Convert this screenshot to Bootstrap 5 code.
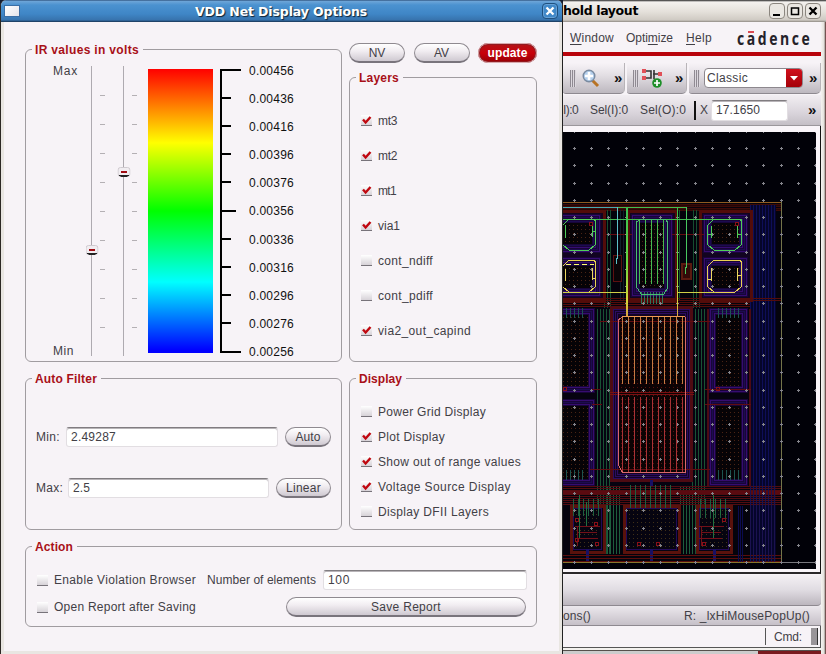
<!DOCTYPE html>
<html lang="en">
<head>
<meta charset="utf-8">
<title>VDD Net Display Options</title>
<link href="https://cdn.jsdelivr.net/npm/bootstrap@5.3.0/dist/css/bootstrap.min.css" rel="stylesheet">
<style>
body{width:826px;height:654px;overflow:hidden;background:#141c30;font:12px/14px "Liberation Sans",Arial,sans-serif;color:#424046}
svg{display:block;flex:none}
.dialog{width:563px;height:654px;flex:none;border-left:1px solid #2c2824;border-right:1px solid #222;border-radius:6px 6px 0 0;background:#e9e6e2;overflow:hidden}
.titlebar{height:22px;flex:none;font:bold 12.5px/22px "DejaVu Sans",sans-serif;white-space:nowrap}
.dlg-title{background:linear-gradient(#1c3c66 0,#6fa6d8 1px,#4b92d0 5px,#3f86c6 14px,#3773ad 20px,#173352 22px);color:#fff;text-shadow:1px 1px 1px #123}
.dlg-title b{padding-top:1px}
.dlg-icon{width:14px;height:10px;background:linear-gradient(135deg,#fff,#e3e3ea);box-shadow:0 0 0 1px #3a6ea5}
.dlg-name{padding-left:176px}
.dlg-close{width:16px;height:16px;border:1px solid #20517f;border-radius:4px;background:#4088c8;box-shadow:inset 0 0 0 1px #66a1d6}
.dlg-body{height:629px;margin:0 3px;padding:21px 21px 0;background:#f7f3f7;display:grid;grid-template-columns:317px 188px;column-gap:7px;grid-template-rows:319px 168px 97px;align-items:end;align-content:start}
.group{border:1px solid #a09ca0;border-radius:6px;margin:0;min-width:0}
.group-title{width:max-content;margin:-7px 0 0 6px;padding:0 4px 0 3px;background:#f7f3f7;color:#a81018;font-size:12px;font-weight:bold;line-height:14px;height:14px;white-space:nowrap}
.g-ir{height:313px}.g-layers{height:285px}.g-filter,.g-display{height:152px}.g-action{height:81px;grid-column:span 2}
.ir-row{padding:7px 0 0 27px}
.ends{width:33px;height:294px}
.bar-spectrum{width:65px;height:284px;margin:5px 0 0 9px;background:linear-gradient(#f00,#ff0 26%,#0f0 50%,#0ff 75%,#00f 99%)}
.scale-svg{margin-left:7px}
.scale-nums{height:295px;color:#111}
.pill{border:1px solid #8f8a90;border-bottom:2px solid #79747c;border-radius:10px;height:20px;padding:0;background:linear-gradient(#fff,#f2eef2 40%,#cfc9d1);color:#424046;font-size:12px;line-height:16px}
.pill-red{background:linear-gradient(#b51217,#c8000a 50%,#9d0006);border:2px solid #931a20;outline:1px solid #d8a8ac;outline-offset:-1px;color:#fff;font-weight:bold;line-height:15px}
.modes{margin-bottom:14px}
.modes .pill{width:56px}.modes .pill-red{width:59px}
.field{height:20px;border:1px solid #e2dee2;border-top:1px solid #807c80;border-radius:3px;background:#fff;padding:0 4px;line-height:18px;color:#424046;box-shadow:inset 0 1px 0 #b8b4b8;white-space:nowrap}
.checks{padding:13px 0 0 11px}
.checks.tall{padding-top:18px}
.check-item{height:25px;gap:6px;white-space:nowrap}
.tall .check-item{height:35px}
.filter-rows{padding:41px 10px 0}
.filter-rows label{height:20px;margin-bottom:31px;white-space:nowrap}
.f-min{width:212px;margin:0 7px 0 6px}.f-max{width:201px;margin:0 7px 0 5px}
.b-auto{width:46px}.b-linear{width:55px}
.act{padding:16px 9px 0 11px;white-space:nowrap}
.act2{padding-top:7px}
.act-check{width:159px;padding-left:6px;flex:none}
.act-num{width:116px;flex:none}
.act-field{width:204px;flex:none}
.act-save{width:240px;margin-left:79px;flex:none}
.w-main{width:263px;height:654px;background:#f7f3f7}
.main-title{background:linear-gradient(#222 0,#f4f2ef 2px,#e4e0da 12px,#cfcac3 20px,#8f8a84 22px);color:#000}
.wbtns{gap:2px;margin-right:5px}
.wbtn{width:16px;height:16px;border:1px solid #8b867f;border-radius:4px;background:#eae7e2}
.main-inner{width:258px;background:#f7f3f7}
.menu{height:30px;padding-top:1px}
.menu u{text-underline-offset:2px}
.m1{width:56px;margin-left:7px}.m2{width:60px}.m3{width:50px}
.stripe{height:4px;background:#b8040c}
.tools{height:39px;padding-top:7px;gap:2px}
.tool{height:31px;border-radius:0 0 5px 3px;background:linear-gradient(#f7f3f7,#e3dfe4 40%,#bdb8bf);border-bottom:1px solid #8e8990;border-right:1px solid #b8b4b8}
.t1{width:62px;padding-left:7px}.t1 svg{margin:0 14px 0 6px}
.t2{width:60px;padding-left:6px}.t2 svg{margin:0 12px 0 2px}
.t3{width:132px;padding-left:5px}.t3 .combo{margin:0 6px 0 4px}
.grip{width:6px;height:17px;background:repeating-linear-gradient(90deg,#8f8a92 0 1px,#dcd8de 1px 2px)}
.more{font:bold 15px/14px "Liberation Sans",sans-serif;color:#111;padding-bottom:1px}
.combo{width:99px;height:20px;border:1px solid #8d888e;border-radius:4px;background:#fff}
.combo-text{padding-left:2px}
.combo-arrow{width:16px;height:18px;background:linear-gradient(#d0101c,#a40008);border-radius:0 3px 3px 0}
.coords{height:31px;background:linear-gradient(#f2eef2,#d9d4db 60%,#c4bfc6);border-bottom:1px solid #9b979c;white-space:nowrap}
.c1{width:27px}.c2{width:50px}.c3{width:54px}
.c4{width:2px;height:19px;background:#111;margin-right:4px}.c5{width:11px}.c6{width:77px;height:21px;margin:0 20px 0 0}
.canvas-frame{height:448px;padding-top:6px;border-right:1px solid #111;border-bottom:2px solid #2a282a;background:#f9f5f9}
.foot1{height:31px;margin-top:1px;border-radius:0 0 4px 0;background:linear-gradient(#f4f0f4,#e0dce2 50%,#bcb6be);border-bottom:1px solid #8e8990}
.foot2{height:20px;background:linear-gradient(#ece8ed,#c6c0c8);border-bottom:1px solid #8e8990;white-space:nowrap}
.foot3{height:22px;border-bottom:1px solid #555;border-right:1px solid #555}
.r-hint{margin-right:11px}
.cmd-line{width:1px;height:17px;background:#555;margin-right:8px}
.cmd-box{width:7px;height:17px;background:#989498;border-right:1px solid #333;margin:0 2px 0 9px}
.desk-edge{height:6px;background:linear-gradient(#f3f1ee 0 2px,#55504c 2px 3px,#0000 3px),linear-gradient(90deg,#ccc 0 195px,#7a1a1e 195px)}
.frame-right{width:5px;background:linear-gradient(90deg,#f6f4f1,#e3e0db 3px,#8f8a84 4px,#5b1a1c 5px)}
</style>
<script src="https://cdn.jsdelivr.net/npm/bootstrap@5.3.0/dist/js/bootstrap.bundle.min.js"></script>
</head>
<body class="d-flex">
<svg width="0" height="0" class="position-absolute"><defs>
<linearGradient id="boxg" x2="0" y2="1"><stop offset="0" stop-color="#fff"/><stop offset="1" stop-color="#d3ced4"/></linearGradient>
<symbol id="off" viewBox="0 0 11 11"><path fill="url(#boxg)" d="M0 0h11v11H0z"/><path d="M0 10.5h11" stroke="#77737a"/></symbol>
<symbol id="on" viewBox="0 0 11 11"><use href="#off"/><path d="M2 4.500L4.600 7.500L9.500 2" fill="none" stroke="#c00810" stroke-width="2.400"/></symbol>
<symbol id="knob" viewBox="0 0 13 11"><rect x=".5" y=".5" width="12" height="9" rx="2.5" fill="#f1edf1" stroke="#cfcacf"/><path d="M1.5 8.5h10M3 9.5h7" stroke="#222"/><path d="M3.5 5h6" stroke="#a00c12" stroke-width="2"/></symbol>
</defs></svg>

<main class="dialog d-flex flex-column">
  <header class="titlebar dlg-title d-flex align-items-center">
    <span class="dlg-icon ms-1"></span>
    <span class="dlg-name flex-grow-1"><b data-w="172">VDD Net Display Options</b></span>
    <span class="dlg-close me-1 d-flex align-items-center justify-content-center"><svg width="10" height="10" viewBox="0 0 10 10"><path d="M1.5 1.5l7 7M8.500 1.500l-7 7" stroke="#fff" stroke-width="2.300"/></svg></span>
  </header>
  <div class="dlg-body">
    <section class="group g-ir">
      <h2 class="group-title"><span data-w="104">IR values in volts</span></h2>
      <div class="ir-row d-flex">
        <div class="ends d-flex flex-column justify-content-between"><span data-w="25">Max</span><span data-w="21">Min</span></div>
        <svg width="53" height="294" viewBox="86 64 53 294">
          <path d="M91.500 66V356M123.500 66V356" stroke="#aeaab0"/>
          <path id="ticks" stroke="#b4b0b4" fill="none"/>
          <use href="#knob" x="85.500" y="245" width="13" height="11"/><use href="#knob" x="117.500" y="167" width="13" height="11"/>
        </svg>
        <div class="bar-spectrum"></div>
        <svg class="scale-svg" width="21" height="294" viewBox="220 64 21 294"><path id="scale" stroke="#000" stroke-width="2" fill="none"/></svg>
        <div class="scale-nums d-flex flex-column justify-content-between ms-2" id="nums"></div>
      </div>
    </section>
    <div>
      <div class="modes d-flex justify-content-between">
        <button class="btn pill" type="button">NV</button><button class="btn pill" type="button">AV</button><button class="btn pill pill-red" type="button"><span data-w="40">update</span></button>
      </div>
      <section class="group g-layers">
        <h2 class="group-title"><span data-w="40">Layers</span></h2>
        <div class="checks tall" id="layers"></div>
      </section>
    </div>
    <section class="group g-filter">
      <h2 class="group-title"><span data-w="62">Auto Filter</span></h2>
      <div class="filter-rows">
        <label class="d-flex align-items-center"><span data-w="24">Min:</span><span class="field f-min"><span data-w="45">2.49287</span></span><button class="btn pill b-auto" type="button"><span data-w="25">Auto</span></button></label>
        <label class="d-flex align-items-center"><span data-w="27">Max:</span><span class="field f-max"><span data-w="17">2.5</span></span><button class="btn pill b-linear" type="button"><span data-w="35">Linear</span></button></label>
      </div>
    </section>
    <section class="group g-display">
      <h2 class="group-title"><span data-w="43">Display</span></h2>
      <div class="checks" id="display"></div>
    </section>
    <section class="group g-action">
      <h2 class="group-title"><span data-w="38">Action</span></h2>
      <div class="act d-flex align-items-center">
        <svg width="11" height="11"><use href="#off" width="11" height="11"/></svg>
        <span class="act-check"><span data-w="142">Enable Violation Browser</span></span>
        <span class="act-num"><span data-w="109">Number of elements</span></span>
        <span class="field act-field"><span data-w="22">100</span></span>
      </div>
      <div class="act act2 d-flex align-items-center">
        <svg width="11" height="11"><use href="#off" width="11" height="11"/></svg>
        <span class="act-check"><span data-w="142">Open Report after Saving</span></span>
        <button class="btn pill act-save" type="button"><span data-w="70">Save Report</span></button>
      </div>
    </section>
  </div>
</main>

<section class="w-main d-flex flex-column">
  <header class="titlebar main-title d-flex align-items-center justify-content-between">
    <b><span data-w="75">hold layout</span></b>
    <span class="d-flex wbtns">
      <span class="wbtn"><svg width="14" height="14"><path d="M3 11h7" stroke="#000" stroke-width="2"/></svg></span>
      <span class="wbtn"><svg width="14" height="14"><path d="M3.500 4h7v6.500h-7zM3 4h8" fill="none" stroke="#000" stroke-width="1.500"/></svg></span>
      <span class="wbtn"><svg width="14" height="14"><path d="M3.500 3.500l7 7M10.500 3.500l-7 7" stroke="#000" stroke-width="2.300"/></svg></span>
    </span>
  </header>
  <div class="d-flex flex-grow-1">
    <div class="main-inner">
      <nav class="menu d-flex align-items-center">
        <span class="m1"><span data-w="44"><u>W</u>indow</span></span><span class="m2"><span data-w="47">Opti<u>m</u>ize</span></span><span class="m3"><span data-w="26"><u>H</u>elp</span></span>
        <svg width="80" height="28" viewBox="736 25 80 28"><g font-family="Open Sans,Noto Sans,sans-serif" font-size="17.500" font-weight="700" fill="#252229"><text transform="translate(737 46) scale(.8 1)" textLength="91" lengthAdjust="spacing">cadence</text></g><path d="M748 33h6" stroke="#d3202a" stroke-width="1.600"/></svg>
      </nav>
      <div class="stripe"></div>
      <div class="tools d-flex">
        <div class="tool t1 d-flex align-items-center"><i class="grip"></i>
          <svg width="18" height="19" viewBox="0 0 18 19"><path d="M10 11l6 6" stroke="#b87324" stroke-width="3"/><circle cx="7" cy="7" r="5.800" fill="#b4cfec" stroke="#7a8ba0" stroke-width="1.400"/><path d="M7 3v8M3 7h8" stroke="#fff" stroke-width="2.600"/></svg>
          <span class="more">»</span></div>
        <div class="tool t2 d-flex align-items-center"><i class="grip"></i>
          <svg width="22" height="21" viewBox="0 0 22 21"><path d="M3 3h7v7H3M12 6h7M13 2v9" fill="none" stroke="#333" stroke-width="1.600"/><path d="M1 1h4v4H1zM1 8h4v4H1zM17 4h4v4h-4z" fill="#e05058"/><circle cx="16" cy="15" r="4.800" fill="#1d8f28"/><path d="M16 12v6M13 15h6" stroke="#fff" stroke-width="1.700"/></svg>
          <span class="more">»</span></div>
        <div class="tool t3 d-flex align-items-center"><i class="grip"></i>
          <span class="combo d-flex justify-content-between align-items-center"><span class="combo-text"><span data-w="41">Classic</span></span><span class="combo-arrow d-flex align-items-center justify-content-center"><svg width="8" height="5"><path d="M0 0h8L4 4.500z" fill="#fff"/></svg></span></span>
          <span class="more">»</span></div>
      </div>
      <div class="coords d-flex align-items-center">
        <span class="c1"><span data-w="15">I):0</span></span><span class="c2"><span data-w="38">Sel(I):0</span></span><span class="c3"><span data-w="46">Sel(O):0</span></span><i class="c4"></i><span class="c5">X</span><span class="field c6"><span data-w="44">17.1650</span></span><span class="more">»</span>
      </div>
      <div class="canvas-frame"><svg id="chip" width="253" height="437" viewBox="563 132 253 437" shape-rendering="crispEdges"></svg></div>
      <div class="foot1"></div>
      <div class="foot2 d-flex align-items-center justify-content-between"><span data-w="28">ons()</span><span class="r-hint"><span data-w="126">R: _lxHiMousePopUp()</span></span></div>
      <div class="foot3 d-flex align-items-center justify-content-end"><i class="cmd-line"></i><span data-w="28">Cmd:</span><i class="cmd-box"></i></div>
      <div class="desk-edge"></div>
    </div>
    <div class="frame-right"></div>
  </div>
</section>

<script>
const $ = id => document.getElementById(id);
const row = ([on, t, w]) => `<div class="check-item d-flex align-items-center"><svg width="11" height="11"><use href="#${on ? 'on' : 'off'}" width="11" height="11"/></svg><span data-w="${w}">${t}</span></div>`;
$('layers').innerHTML = [[1,'mt3',19],[1,'mt2',19],[1,'mt1',18],[1,'via1',22],[0,'cont_ndiff',55],[0,'cont_pdiff',55],[1,'via2_out_capind',93]].map(row).join('');
$('display').innerHTML = [[0,'Power Grid Display',108],[1,'Plot Display',67],[1,'Show out of range values',143],[1,'Voltage Source Display',133],[0,'Display DFII Layers',111]].map(row).join('');
$('nums').innerHTML = ['456','436','416','396','376','356','336','316','296','276','256'].map(n => `<span data-w="45">0.00${n}</span>`).join('');
let d = ''; for (let i = 0; i < 9; i++) { const y = 95.5 + Math.round(i * 29); d += `M100 ${y}h5M132 ${y}h5`; }
$('ticks').setAttribute('d', d);
d = 'M221 69V353'; [70,98,126,154,182,211,239,267,295,323,352].forEach((y, i) => d += `M220 ${y}h${i % 10 ? (i === 5 ? 16 : 11) : 21}`);
$('scale').setAttribute('d', d);

/* Chip layout drawing: nested wells, routing stripes, then bright nets and the snap grid */
let s = '';
const rect = (x, y, x2, y2, f, st = 'none', w = 1) => s += `<rect x="${x}" y="${y}" width="${x2 - x}" height="${y2 - y}" fill="${f}" stroke="${st}" stroke-width="${w}"/>`;
const line = (p, c, w = 1) => s += `<path d="${p}" fill="none" stroke="${c}" stroke-width="${w}"/>`;
const vs = (x, x2, y, y2, step, c) => { let p = ''; for (let i = x; i < x2; i += step) p += `M${Math.round(i) + .5} ${y}V${y2}`; line(p, c); };
const hs = (y, y2, x, x2, step, c) => { let p = ''; for (let i = y; i < y2; i += step) p += `M${x} ${i + .5}H${x2}`; line(p, c); };
const dots = (x, y, x2, y2, c) => { let p = ''; for (let i = x; i < x2; i += 4) for (let j = y; j < y2; j += 4) p += `M${i} ${j + .5}h1`; line(p, c); };
const well = (x, y, x2, y2, n) => { rect(x, y, x2, y2, '#180538'); for (let i = 0; i < n; i++) rect(x + 1.5 + i * 2, y + 1.5 + i * 2, x2 - 1.5 - i * 2, y2 - 1.5 - i * 2, 'none', i % 2 ? '#1c0c50' : '#360c70'); const k = n * 2 + 1; rect(x + k, y + k, x2 - k, y2 - k, '#060306'); dots(x + k + 2, y + k + 2, x2 - k, y2 - k, '#4a2414'); };
rect(563, 132, 816, 569, '#010108');
rect(563, 203, 781, 562, '#04030c');
hs(204, 212, 563, 781, 2, '#3d0a08'); hs(205, 211, 563, 781, 4, '#240604');
rect(750, 205, 776, 562, '#05052a'); vs(750, 776, 205, 562, 3, '#0e0e58');
vs(604, 611, 210, 308, 3, '#164c30'); vs(693, 701, 210, 308, 3, '#164c30'); vs(620, 628, 210, 300, 3, '#10202a'); vs(676, 682, 210, 300, 3, '#145a2c');
[[556, 604], [628, 676], [700, 751]].forEach(([a, b]) => rect(a, 211, b, 300, '#120420', '#520c0a', 3));
well(550, 214, 601, 253, 4); well(550, 257, 601, 297, 4); well(631, 214, 673, 297, 4); well(703, 214, 748, 253, 4); well(703, 257, 748, 297, 4);
hs(298, 308, 563, 750, 2, '#540c0a'); hs(298, 301, 750, 781, 2, '#540c0a');
rect(563, 308, 750, 486, '#060310');
vs(597, 611, 309, 554, 3, '#185234'); vs(692, 705, 309, 554, 3, '#185234');
vs(607, 622, 486, 554, 3, '#1d5c3c'); vs(680, 695, 486, 554, 3, '#1d5c3c');
well(550, 308, 595, 393, 3); well(550, 399, 595, 486, 3); well(709, 308, 748, 393, 3); well(709, 399, 748, 486, 3);
line('M708 309V486M749.500 309V486', '#4c0a14', 2);
rect(611.5, 307.5, 691, 480, '#120424', '#4e0b12', 3);
for (let i = 0; i < 3; i++) rect(613.5 + i * 2, 309.5 + i * 2, 689 - i * 2, 478 - i * 2, 'none', '#2c0c60');
rect(619, 317, 686, 472, '#0c0304'); dots(621, 319, 685, 471, '#58100c');
hs(486, 506, 563, 781, 2, '#520c10'); rect(563, 491, 781, 494, '#5b0a10');
[[571, 604], [624, 679], [697, 731]].forEach(([a, b]) => { rect(a, 506, b, 552, '#060410', '#5a120c', 3); rect(a + 2.5, 508.5, b - 2.5, 549.5, 'none', '#220a58'); dots(a + 5, 510, b - 4, 548, '#403018'); });
vs(573, 600, 499, 516, 5, '#1f5f40'); vs(630, 674, 485, 508, 5, '#1f5f40'); vs(700, 728, 499, 518, 5, '#1f5f40');
[[575, 600], [699, 724]].forEach(([a, b]) => line(`M${a} 526.500H${b}M${a + 2} 532.500H${b - 3}M${a} 538.500H${b - 2}M${a + 2} 526V546`, '#721018'));
[[575, 518], [594, 522], [575, 538], [595, 542], [702, 542], [722, 518], [637, 542], [656, 542], [589, 222], [735, 222], [563, 387], [716, 387]].forEach(([x, y]) => rect(x + .5, y + .5, x + 3.5, y + 3.5, 'none', '#8a1018'));
line('M579.500 495V538M586.500 502V526M713.500 495V538M720.500 500V515', '#207040');
line('M651.500 480V486M714.500 549V562M651.500 549V562M587.500 549V562', '#181064', 3);
hs(555, 562, 563, 781, 3, '#5a0e0c'); vs(738, 744, 506, 562, 2, '#0b0b50'); vs(750, 776, 486, 562, 3, '#1b1250');
line('M606 234.500H632M672 234.500H704M600 321.500H710M592 389.500H601M705 389.500H751M592 404.500H602M705 404.500H751M590 469.500H710', '#620c10');
hs(392, 396, 610, 694, 2, '#781012');
rect(613.5, 255.500, 621.5, 281.500, '#0b0508', '#5c1010'); rect(682, 264, 691, 279, '#320a08', '#5b1a10', 2);
vs(641, 663, 292, 304, 3, '#31745a');
vs(566, 586, 308, 318, 4, '#1d5350'); vs(718, 740, 308, 318, 4, '#1d5350');
vs(566, 586, 470, 480, 4, '#1d5350'); vs(718, 740, 470, 480, 4, '#1d5350');
line('M563 202.500H781', '#8e5b20'); line('M781.500 202V562', '#74744a'); line('M563 562.500H781', '#85752c'); line('M781 562.500H816', '#77777d');

let g = ''; for (let i = 0; i < 15; i++) for (let j = 0; j < 26; j++) { const x = Math.floor(574.5 + i * 17.22), y = Math.floor(131.5 + j * 17.24); g += `M${x - 1} ${y + .5}h3M${x + .5} ${y - 1}v3`; }
line(g, '#85858c');

s += '<defs><linearGradient id="net" gradientUnits="userSpaceOnUse" x1="0" y1="207" x2="0" y2="316"><stop offset="0" stop-color="#38c050"/><stop offset=".5" stop-color="#68d840"/><stop offset=".85" stop-color="#d4d838"/><stop offset="1" stop-color="#d8a040"/></linearGradient></defs>';
line('M563 207.500H618', '#45aab0'); line('M617 207.500H687M563 219.500H742', '#42bd50');
line('M617.500 207V258L616.500 259V264', '#5cc0c8'); line('M686.500 207V267L685.500 268V274', '#48c860');
s += '<path d="M626 207h2V316h-2zM677 207h1V316h-1z" fill="url(#net)"/>';
const oct = (x, y, x2, y2, c) => line(`M${x + 6} ${y}H${x2 - 1}L${x2} ${y + 2}V${y2 - 6}L${x2 - 7} ${y2}H${x + 7}L${x} ${y2 - 6}V${y + 6}Z`, c);
oct(562.5, 219.5, 595.5, 250.5, '#4fce58'); oct(707.5, 219.5, 741.5, 250.5, '#4fce58');
oct(562.5, 260.5, 595.5, 292.5, '#e8d450'); oct(707.5, 260.5, 741.5, 292.5, '#ead052');
line('M565.500 225V238M592.500 226V237M592 231.500H595M711.500 226V238M711 234.500H708M737.500 226V238M737 234.500H741', '#4fce58');
line('M565.500 269V281M592.500 268V280M592 278.500H595M711.500 268V281M711 279.500H708M737.500 268V281M737 275.500H741', '#ecd860');
s += '<path d="M566 264.500h28" stroke="#ffff70" stroke-dasharray="5 3"/>';
line('M563 292.500H626M677 292.500H716', '#cfcf45');
line('M639.500 219.500H665.500L667.500 222V288L663.500 294.500H641.500L636.500 287V222Z', '#46c070');
line('M639.500 220V284M645.500 220V284M651.500 220V284M657.500 220V284M663.500 220V284', '#48ba50');
vs(622, 684, 317, 384, 6, '#c47a42'); vs(622, 684, 397, 472, 6, '#a83236');
line('M622.500 316.500H684.500L685.500 318V472.500H622.500L618.500 465V320Z', '#d8686a');
line('M622 316.500H685', '#ee9a52');
$('chip').innerHTML = s;

/* Even out tracking so each label occupies its nominal width */
document.querySelectorAll('[data-w]').forEach(e => {
  e.classList.add('d-inline-block', 'text-nowrap');
  e.style.width = 'max-content';
  const n = e.textContent.length, w = e.getBoundingClientRect().width;
  e.style.letterSpacing = ((e.dataset.w - w) / n) + 'px';
  e.style.width = e.dataset.w + 'px';
});
</script>
</body>
</html>
